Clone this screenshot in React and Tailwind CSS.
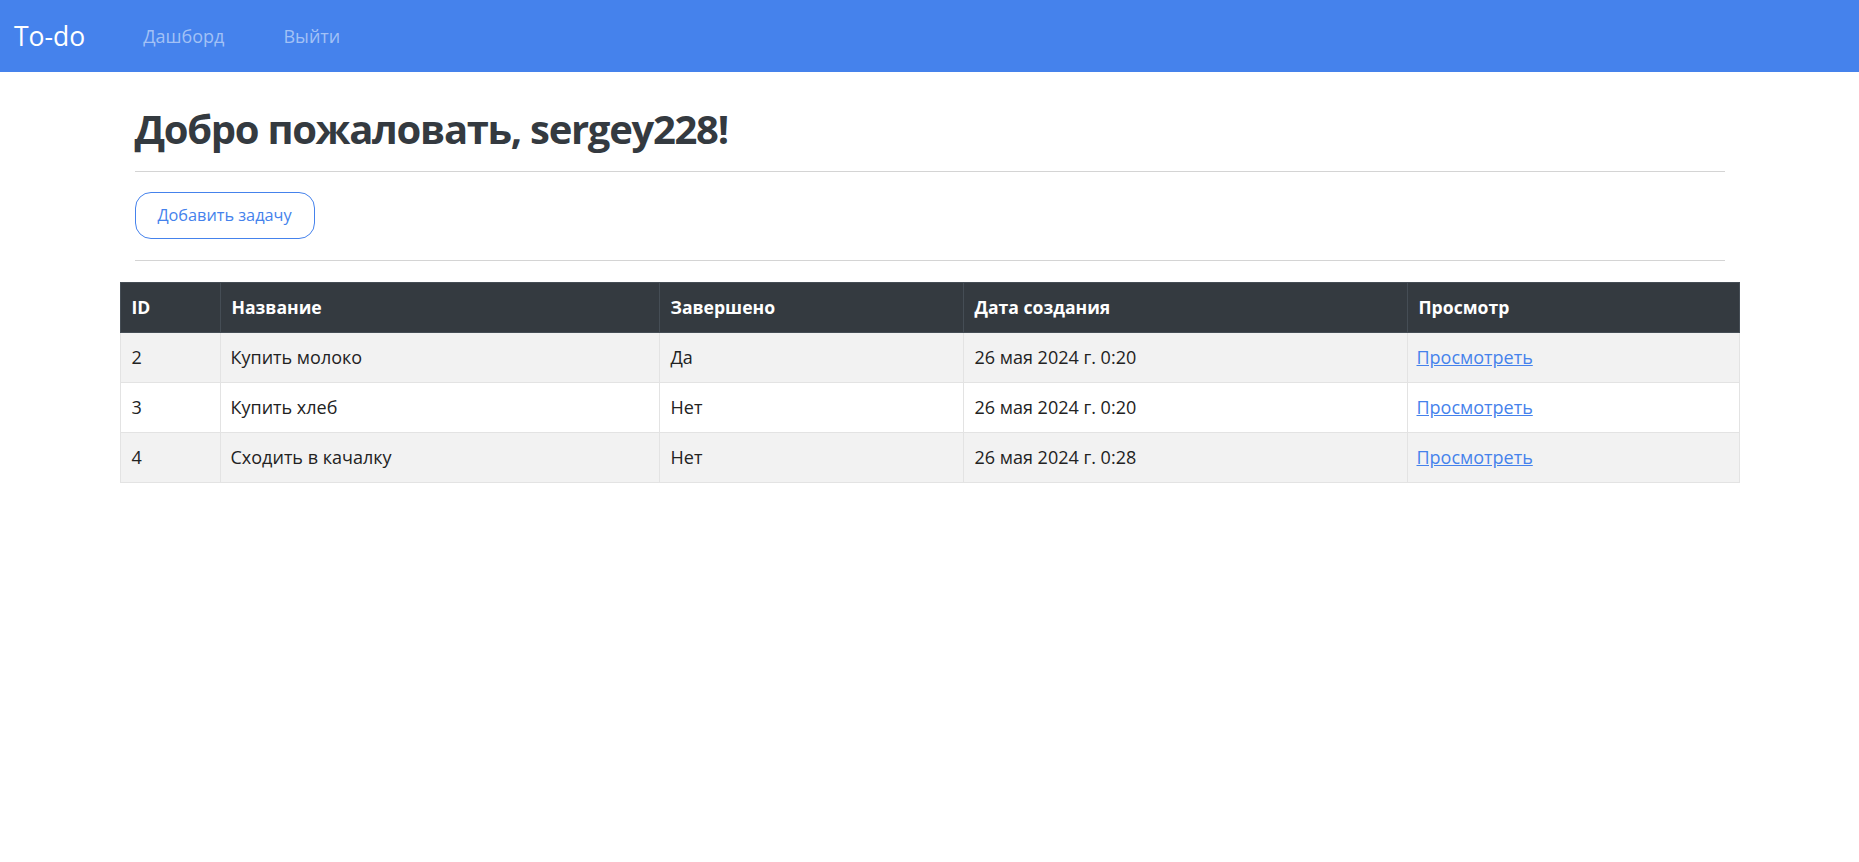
import React from 'react';

const TASKS = [
  { id: 2, title: 'Купить молоко', done: true, created: '26 мая 2024 г. 0:20' },
  { id: 3, title: 'Купить хлеб', done: false, created: '26 мая 2024 г. 0:20' },
  { id: 4, title: 'Сходить в качалку', done: false, created: '26 мая 2024 г. 0:28' },
];

const COLS = [
  { label: 'ID', width: 'w-[100px]' },
  { label: 'Название', width: 'w-[439px]' },
  { label: 'Завершено', width: 'w-[304px]' },
  { label: 'Дата создания', width: 'w-[444px]' },
  { label: 'Просмотр', width: '' },
];

const App = () => {
  return (
    <div className="min-h-screen bg-white font-['Open_Sans',sans-serif] text-[#222]">
      {/* Navbar */}
      <nav className="h-[72px] bg-[#4582EC] flex items-center pl-[14px]">
        <span className="text-[26.5px] text-white mr-[58px] leading-none">To-do</span>
        <div className="flex items-center gap-[59px] text-[18px] text-[#a2c1f6]">
          <a href="#" className="hover:text-white">Дашборд</a>
          <a href="#" className="hover:text-white">Выйти</a>
        </div>
      </nav>

      <div className="w-[1620px] mx-auto">
        <div className="px-[15px] pt-[33px]">
          <h1 className="text-[40px] font-bold tracking-[-1.3px] text-[#343a40] leading-[1.2]">
            Добро пожаловать, sergey228!
          </h1>
          <hr className="mt-[18px] border-t border-[#d4d4d4]" />
          <button
            type="button"
            className="mt-[20px] h-[47px] w-[180px] rounded-[16px] border border-[#4582EC] text-[#4582EC] text-[16.3px] hover:bg-[#4582EC] hover:text-white"
          >
            Добавить задачу
          </button>
          <hr className="mt-[21px] border-t border-[#d4d4d4]" />
        </div>

        {/* Tasks table */}
        <table className="mt-[21px] w-full border-collapse text-[18px]">
          <thead>
            <tr className="bg-[#343a40] text-white">
              {COLS.map(col => (
                <th
                  key={col.label}
                  className={`${col.width} h-[50px] px-[11px] text-left text-[17.6px] font-bold border border-[#454d55]`}
                >
                  {col.label}
                </th>
              ))}
            </tr>
          </thead>
          <tbody>
            {TASKS.map((task, i) => (
              <tr key={task.id} className={i % 2 === 0 ? 'bg-[#f2f2f2]' : 'bg-white'}>
                <td className="h-[50px] px-[11px] border border-[#e3e3e3]">{task.id}</td>
                <td className="px-[10px] border border-[#e3e3e3]">{task.title}</td>
                <td className="px-[11px] border border-[#e3e3e3]">{task.done ? 'Да' : 'Нет'}</td>
                <td className="px-[11px] border border-[#e3e3e3]">{task.created}</td>
                <td className="px-[9px] border border-[#e3e3e3]">
                  <a href="#" className="text-[#4582EC] underline">Просмотреть</a>
                </td>
              </tr>
            ))}
          </tbody>
        </table>
      </div>
    </div>
  );
};

export default App;
